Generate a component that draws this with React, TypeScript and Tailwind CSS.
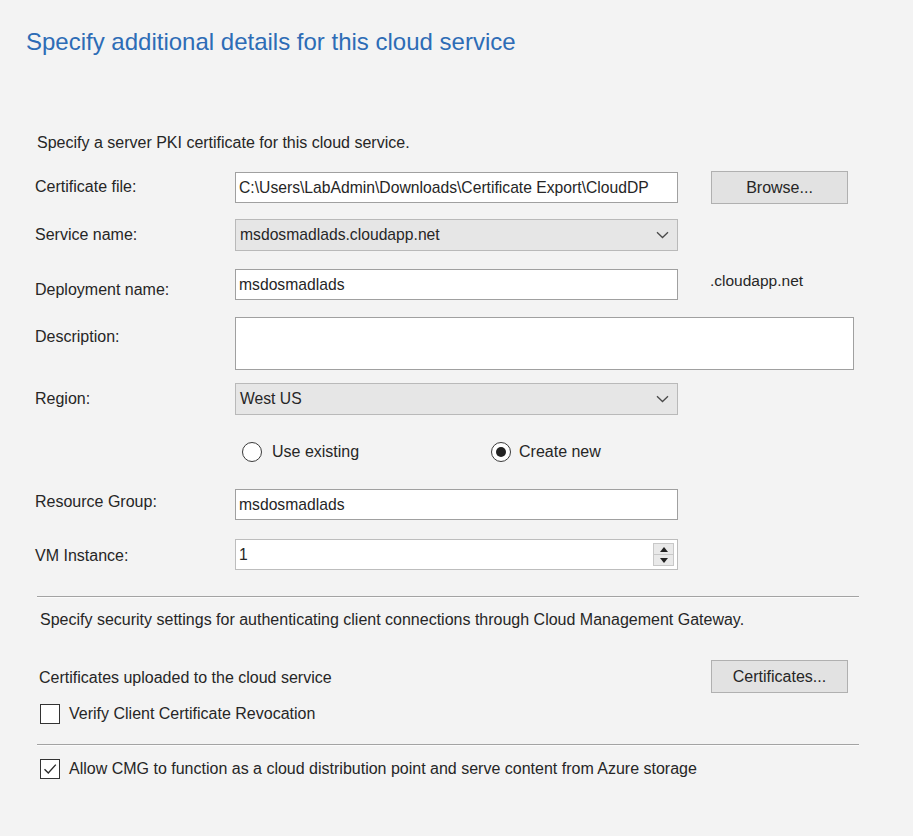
import React from "react";

const Chevron = () => (
  <svg width="13" height="8" viewBox="0 0 13 8" className="shrink-0">
    <path d="M1 1.2 L6.5 6.5 L12 1.2" fill="none" stroke="#4a4a4a" strokeWidth="1.3" />
  </svg>
);

function Row({
  mt,
  labelPt,
  label,
  children,
}: {
  mt: string;
  labelPt: string;
  label: string;
  children: React.ReactNode;
}) {
  return (
    <div className={`flex items-start ${mt}`}>
      <div className={`w-[200px] shrink-0 leading-[20px] whitespace-nowrap ${labelPt}`}>{label}</div>
      {children}
    </div>
  );
}

function TextBox({ value, h = "h-[31px]", w = "w-[443px]" }: { value?: string; h?: string; w?: string }) {
  return (
    <div
      className={`${h} ${w} shrink-0 border border-[#a0a0a0] bg-white flex items-center pl-[3px] pr-[2px] overflow-hidden whitespace-nowrap text-[15.7px] text-[#262626]`}
    >
      {value}
    </div>
  );
}

function Select({ value }: { value: string }) {
  return (
    <div className="h-[32px] w-[443px] shrink-0 border border-[#b9b9b9] bg-[#e6e6e6] flex items-center justify-between pl-[4px] pr-[8px] whitespace-nowrap text-[15.7px] text-[#262626]">
      <span>{value}</span>
      <Chevron />
    </div>
  );
}

function Button({ label }: { label: string }) {
  return (
    <div className="h-[33px] w-[137px] shrink-0 border border-[#b0b0b0] bg-[#e2e2e2] flex items-center justify-center text-[16px] text-[#262626]">
      {label}
    </div>
  );
}

function Radio({ checked }: { checked?: boolean }) {
  return (
    <div
      className={`w-[20px] h-[20px] rounded-full bg-white flex items-center justify-center shrink-0 ${
        checked ? "border-[1.5px] border-[#3a3a3a]" : "border border-[#3a3a3a]"
      }`}
    >
      {checked && <div className="w-[10px] h-[10px] rounded-full bg-[#222]" />}
    </div>
  );
}

function CheckBox({ checked }: { checked?: boolean }) {
  return (
    <div className="w-[20px] h-[20px] border border-[#333] bg-white shrink-0 flex items-center justify-center">
      {checked && (
        <svg width="16" height="16" viewBox="0 0 16 16">
          <path d="M2.5 8.2 L6.3 12 L13.8 3.6" fill="none" stroke="#2a2a2a" strokeWidth="1.4" />
        </svg>
      )}
    </div>
  );
}

export default function App() {
  return (
    <div className="w-[913px] h-[836px] overflow-hidden bg-[#f3f3f3] font-['Liberation_Sans',Arial,sans-serif] text-[16px] text-[#262626]">
      <div className="pl-[26px] pt-[27px] text-[24px] leading-[30px] text-[#2d6cb6] whitespace-nowrap">
        Specify additional details for this cloud service
      </div>

      <div className="pl-[35px]">
        <div className="mt-[76px] pl-[2px] leading-[20px]">Specify a server PKI certificate for this cloud service.</div>

        <Row mt="mt-[19px]" labelPt="pt-[5px]" label="Certificate file:">
          <TextBox value="C:\Users\LabAdmin\Downloads\Certificate Export\CloudDP" />
          <div className="ml-[33px] -mt-[1px]">
            <Button label="Browse..." />
          </div>
        </Row>

        <Row mt="mt-[15px]" labelPt="pt-[6px]" label="Service name:">
          <Select value="msdosmadlads.cloudapp.net" />
        </Row>

        <Row mt="mt-[18px]" labelPt="pt-[11px]" label="Deployment name:">
          <TextBox value="msdosmadlads" />
          <div className="ml-[32px] pt-[2px] leading-[20px] text-[15.5px]">.cloudapp.net</div>
        </Row>

        <Row mt="mt-[17px]" labelPt="pt-[10px]" label="Description:">
          <TextBox h="h-[53px]" w="w-[619px]" />
        </Row>

        <Row mt="mt-[13px]" labelPt="pt-[6px]" label="Region:">
          <Select value="West US" />
        </Row>

        <div className="flex items-center mt-[27px] h-[20px] pl-[207px]">
          <div className="w-[249px] flex items-center shrink-0">
            <Radio />
            <span className="ml-[10px] leading-[20px]">Use existing</span>
          </div>
          <Radio checked />
          <span className="ml-[8px] leading-[20px]">Create new</span>
        </div>

        <Row mt="mt-[27px]" labelPt="pt-[3px]" label="Resource Group:">
          <TextBox value="msdosmadlads" />
        </Row>

        <Row mt="mt-[19px]" labelPt="pt-[7px]" label="VM Instance:">
          <div className="h-[31px] w-[443px] shrink-0 border border-[#bdbdbd] bg-white flex items-center pl-[3px] pr-[3px] text-[15.7px] text-[#262626]">
            <span className="flex-1">1</span>
            <div className="w-[21px] h-[23px] border border-[#c8c8c8] bg-[#e9e9e9] flex flex-col">
              <div className="flex-1 flex items-center justify-center border-b border-[#c8c8c8]">
                <svg width="8" height="5" viewBox="0 0 8 5">
                  <path d="M0 5 L4 0 L8 5 Z" fill="#222" />
                </svg>
              </div>
              <div className="flex-1 flex items-center justify-center">
                <svg width="8" height="5" viewBox="0 0 8 5">
                  <path d="M0 0 L4 5 L8 0 Z" fill="#222" />
                </svg>
              </div>
            </div>
          </div>
        </Row>

        <div className="mt-[26px] ml-[2px] w-[822px] h-px bg-[#a3a3a3]" />
        <div className="ml-[2px] w-[822px] h-px bg-[#fbfbfb]" />

        <div className="mt-[12px] pl-[5px] leading-[20px]">
          Specify security settings for authenticating client connections through Cloud Management Gateway.
        </div>

        <div className="flex items-start mt-[30px]">
          <div className="w-[676px] shrink-0 pl-[4px] pt-[8px] leading-[20px]">Certificates uploaded to the cloud service</div>
          <Button label="Certificates..." />
        </div>

        <div className="flex items-center mt-[11px] pl-[5px] h-[20px]">
          <CheckBox />
          <span className="ml-[9px] leading-[20px]">Verify Client Certificate Revocation</span>
        </div>

        <div className="mt-[20px] ml-[2px] w-[822px] h-px bg-[#a3a3a3]" />
        <div className="ml-[2px] w-[822px] h-px bg-[#fbfbfb]" />

        <div className="flex items-center mt-[13px] pl-[5px] h-[20px]">
          <CheckBox checked />
          <span className="ml-[9px] leading-[20px]">Allow CMG to function as a cloud distribution point and serve content from Azure storage</span>
        </div>
      </div>
    </div>
  );
}
